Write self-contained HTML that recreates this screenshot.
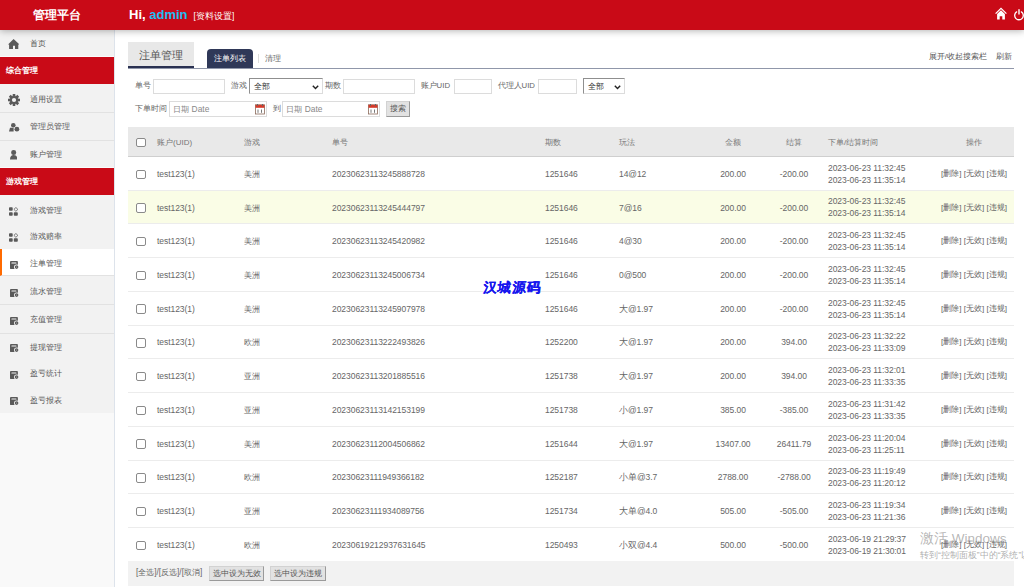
<!DOCTYPE html>
<html><head><meta charset="utf-8">
<style>
*{box-sizing:border-box;margin:0;padding:0}
html,body{width:1024px;height:587px;overflow:hidden;background:#fff;font-family:"Liberation Sans",sans-serif;color:#666;position:relative}
#hdr{position:absolute;left:0;top:0;width:1024px;height:29.9px;background:#c90a17;z-index:5;box-shadow:0 1px 7px rgba(0,0,0,.3)}
#logo{position:absolute;left:0;top:0;width:114px;height:29px;line-height:30px;text-align:center;color:#fff;font-size:12px;font-weight:bold}
#hi{position:absolute;left:129px;top:0;height:29px;line-height:30px;color:#fff;font-size:13px;font-weight:bold;white-space:nowrap}
#hi b{color:#1fbdf3}
#hi span{font-size:8.5px;font-weight:normal;margin-left:6px}
#side{position:absolute;left:0;top:29px;width:115px;height:558px;background:#f9f9f9;border-right:1px solid #dde3eb}
.mi{position:absolute;left:0;width:114px;background:#f2f2f2;font-size:8px;padding-left:29.5px;color:#555;white-space:nowrap}
.mi.act{background:#fff;border-left:2.5px solid #ff6a00;padding-left:27.5px}
.mh{position:absolute;left:0;width:114px;box-shadow:0 -1px 0 #fbfbfb;background:#c90a17;color:#fff;font-weight:bold;font-size:8px;padding-left:6px}
.ic{position:absolute}
#tabbox{position:absolute;left:128px;top:41.5px;width:66px;height:26.5px;background:#e8e8e8;border-bottom:2px solid #2a3152;color:#555;font-size:10.5px;text-align:center;line-height:26px}
#tline{position:absolute;left:128px;top:67.5px;width:886px;height:1px;background:#9097aa}
#pill{position:absolute;left:207px;top:49.3px;width:45.5px;height:19px;background:#2f3858;border-radius:4px 4px 0 0;color:#fff;font-size:8px;text-align:center;line-height:20px}
#sep{position:absolute;left:258px;top:54px;width:1px;height:9px;background:#ddd}
#clr{position:absolute;left:265px;top:53px;font-size:8px;color:#666;line-height:12px}
.tools{position:absolute;top:51px;font-size:8px;color:#555;line-height:11px;white-space:nowrap}
.lb{position:absolute;font-size:7.8px;color:#666;line-height:10px;white-space:nowrap}
.inp{position:absolute;height:15.5px;border:1px solid #dcdcdc;background:#fff}
.sel{position:absolute;height:16px;border:1px solid #8f8f8f;border-right-color:#dcdcdc;border-bottom-color:#dcdcdc;background:#fff;font-size:8.2px;color:#333;line-height:16.5px;padding-left:4px}
.sel svg{position:absolute;right:3px;top:5.5px}
.dt{position:absolute;height:15.5px;border:1px solid #dcdcdc;background:#fff;font-size:8.4px;color:#888;line-height:15.5px;padding-left:3.3px}
.cal{position:absolute;right:1.2px;top:2px}
.btn{position:absolute;border:1px solid;border-color:#d2d2d2 #9a9a9a #9a9a9a #d2d2d2;background:#e2e2e2;font-size:8px;color:#555;text-align:center}
#tbl{position:absolute;left:128px;top:0;width:886px}
.th{position:absolute;left:128px;width:886px;background:#e9e9e9;border-bottom:1px solid #cfcfcf}
.tr{position:absolute;left:128px;width:886px;background:#fff;border-bottom:1px solid #ececec}
.tr.hl{background:#fafde6}
.th span,.tr span{position:absolute;font-size:8.3px;color:#666;white-space:nowrap}
.th span{font-size:8px;color:#777}
.tr span.n{font-size:8.5px;letter-spacing:-0.05px}
span.c{width:80px;text-align:center}
.tr span.tm{line-height:12px}
.tr span.op{width:80px;font-size:8.1px}
.cb{position:absolute;width:9.5px;height:9.5px;border:1px solid #8a8a8a;border-radius:2px;background:#fff}
#foot{position:absolute;left:128px;top:560.6px;width:886px;height:25.2px;background:#f2f2f2}
#foot .t{position:absolute;left:8px;top:7.5px;font-size:8.2px;color:#666;line-height:10px;white-space:nowrap}
#wm1{position:absolute;left:920px;top:530.5px;font-size:13.5px;color:rgba(120,120,120,.55);white-space:nowrap;line-height:16px}
#wm2{position:absolute;left:920px;top:550px;font-size:8.5px;color:rgba(120,120,120,.6);white-space:nowrap;line-height:11px}
#brand{position:absolute;left:483px;top:280px;font-size:13.5px;font-weight:bold;color:#1616ee;letter-spacing:0.6px;white-space:nowrap;line-height:16px;transform:skewX(-6deg);text-shadow:0.25px 0 0 #1616ee}
</style></head><body>
<div id="hdr">
  <div id="logo">管理平台</div>
  <div id="hi">Hi, <b>admin</b><span>[资料设置]</span></div>
  <svg style="position:absolute;left:995px;top:7.2px" width="12" height="13" viewBox="0 0 12 13"><path d="M0.6 6.6L6 1.3 11.4 6.6" fill="none" stroke="#fff" stroke-width="1.3"/><path d="M2.1 6.9L6 3.2 9.9 6.9V12.4H7.3V9.2H4.7V12.4H2.1Z" fill="#fff"/></svg>
  <svg style="position:absolute;left:1013.3px;top:8.6px" width="12" height="12" viewBox="0 0 12 12"><path d="M3.6 2.9A4.3 4.3 0 1 0 8.4 2.9" fill="none" stroke="#fff" stroke-width="1.3" stroke-linecap="round"/><path d="M6 0.7V5" stroke="#fff" stroke-width="1.4" stroke-linecap="round"/></svg>
</div>
<div id="side"></div><div style="position:absolute;left:0;top:29px;width:114px;height:383.8px;background:#f2f2f2"></div>
<div class="mi" style="top:29.00px;height:27.8px;line-height:29.30px">首页</div><div class="mh" style="top:56.80px;height:27.2px;line-height:28.70px">综合管理</div><div class="mi" style="top:84.00px;height:28.7px;line-height:31.80px;border-bottom:1px solid #e2e2e2">通用设置</div><div class="mi" style="top:112.70px;height:28.2px;line-height:28.10px;border-bottom:1px solid #e2e2e2">管理员管理</div><div class="mi" style="top:140.90px;height:27.1px;line-height:28.60px">账户管理</div><div class="mh" style="top:168.00px;height:26.9px;line-height:28.40px">游戏管理</div><div class="mi" style="top:194.90px;height:27.1px;line-height:31.20px">游戏管理</div><div class="mi" style="top:222.00px;height:27.1px;line-height:29.40px">游戏赔率</div><div class="mi act" style="top:249.10px;height:27.4px;line-height:30.50px;border-bottom:1px solid #e2e2e2">注单管理</div><div class="mi" style="top:276.50px;height:28.6px;line-height:30.10px;border-bottom:1px solid #e2e2e2">流水管理</div><div class="mi" style="top:305.10px;height:28.7px;line-height:30.20px;border-bottom:1px solid #e2e2e2">充值管理</div><div class="mi" style="top:333.80px;height:26.4px;line-height:27.90px">提现管理</div><div class="mi" style="top:360.20px;height:26.3px;line-height:27.80px">盈亏统计</div><div class="mi" style="top:386.50px;height:26.6px;line-height:27.50px">盈亏报表</div><svg class="ic" style="left:8.1px;top:39.2px" width="11.4" height="10.3" viewBox="0 0 11.4 10.3"><path d="M5.6 0L0 5.4H1.1V10.2H5V6.7H7V10.2H10.3V5.4H11.3Z" fill="#5a5a5a"/></svg><svg class="ic" style="left:8px;top:93.75px" width="12" height="12" viewBox="-6 -6 12 12"><path d="M-1.25 -6H1.25L1.5 -3.2H-1.5Z" transform="rotate(0)" fill="#5a5a5a"/><path d="M-1.25 -6H1.25L1.5 -3.2H-1.5Z" transform="rotate(45)" fill="#5a5a5a"/><path d="M-1.25 -6H1.25L1.5 -3.2H-1.5Z" transform="rotate(90)" fill="#5a5a5a"/><path d="M-1.25 -6H1.25L1.5 -3.2H-1.5Z" transform="rotate(135)" fill="#5a5a5a"/><path d="M-1.25 -6H1.25L1.5 -3.2H-1.5Z" transform="rotate(180)" fill="#5a5a5a"/><path d="M-1.25 -6H1.25L1.5 -3.2H-1.5Z" transform="rotate(225)" fill="#5a5a5a"/><path d="M-1.25 -6H1.25L1.5 -3.2H-1.5Z" transform="rotate(270)" fill="#5a5a5a"/><path d="M-1.25 -6H1.25L1.5 -3.2H-1.5Z" transform="rotate(315)" fill="#5a5a5a"/><circle r="4.1" fill="#5a5a5a"/><circle r="2.1" fill="#f2f2f2"/></svg><svg class="ic" style="left:8.6px;top:123px" width="11" height="10" viewBox="0 0 11 10"><circle cx="4.3" cy="2.3" r="2.3" fill="#5a5a5a"/><path d="M1 4.8H4.6V8.5H0Z" fill="#5a5a5a"/><circle cx="7.9" cy="6.2" r="2.4" fill="#5a5a5a"/></svg><svg class="ic" style="left:9.9px;top:150.1px" width="7.4" height="9.8" viewBox="0 0 7.4 9.8"><circle cx="3.7" cy="2.6" r="2.5" fill="#5a5a5a"/><path d="M0 9.6C0 6.6 1.2 5 3.7 5S7.4 6.6 7.4 9.6Z" fill="#5a5a5a"/></svg><svg class="ic" style="left:9.3px;top:206.5px" width="9.6" height="9" viewBox="0 0 9.6 9"><rect x="0" y="0.2" width="3.7" height="3.5" rx="0.8" fill="#5a5a5a"/><rect x="0" y="5.2" width="3.7" height="3.5" rx="0.8" fill="#5a5a5a"/><rect x="4.8" y="5.2" width="4" height="3.5" rx="0.8" fill="#5a5a5a"/><path d="M6.9 0.5L8.9 2.4 6.9 4.3 4.9 2.4Z" fill="none" stroke="#5a5a5a" stroke-width="0.8"/></svg><svg class="ic" style="left:9.3px;top:233px" width="9.6" height="9" viewBox="0 0 9.6 9"><rect x="0" y="0.2" width="3.7" height="3.5" rx="0.8" fill="#5a5a5a"/><rect x="0" y="5.2" width="3.7" height="3.5" rx="0.8" fill="#5a5a5a"/><rect x="4.8" y="5.2" width="4" height="3.5" rx="0.8" fill="#5a5a5a"/><path d="M6.9 0.5L8.9 2.4 6.9 4.3 4.9 2.4Z" fill="none" stroke="#5a5a5a" stroke-width="0.8"/></svg><svg class="ic" style="left:9.9px;top:260.6px" width="9" height="8.2" viewBox="0 0 9 8.2"><rect x="0" y="0" width="7.9" height="8" rx="0.5" fill="#5a5a5a"/><rect x="1.4" y="1.5" width="5.1" height="1.1" rx="0.5" fill="#fff"/><circle cx="6.6" cy="6.1" r="2.6" fill="#fff"/><circle cx="6.6" cy="6.1" r="1.8" fill="#5a5a5a"/><circle cx="6.6" cy="6.1" r="0.6" fill="#aaa"/></svg><svg class="ic" style="left:9.9px;top:288.5px" width="9" height="8.2" viewBox="0 0 9 8.2"><rect x="0" y="0" width="7.9" height="8" rx="0.5" fill="#5a5a5a"/><rect x="1.4" y="1.5" width="5.1" height="1.1" rx="0.5" fill="#f2f2f2"/><circle cx="6.6" cy="6.1" r="2.6" fill="#f2f2f2"/><circle cx="6.6" cy="6.1" r="1.8" fill="#5a5a5a"/><circle cx="6.6" cy="6.1" r="0.6" fill="#aaa"/></svg><svg class="ic" style="left:9.9px;top:316.9px" width="9" height="8.2" viewBox="0 0 9 8.2"><rect x="0" y="0" width="7.9" height="8" rx="0.5" fill="#5a5a5a"/><rect x="1.4" y="1.5" width="5.1" height="1.1" rx="0.5" fill="#f2f2f2"/><circle cx="6.6" cy="6.1" r="2.6" fill="#f2f2f2"/><circle cx="6.6" cy="6.1" r="1.8" fill="#5a5a5a"/><circle cx="6.6" cy="6.1" r="0.6" fill="#aaa"/></svg><svg class="ic" style="left:9.9px;top:344.20000000000005px" width="9" height="8.2" viewBox="0 0 9 8.2"><rect x="0" y="0" width="7.9" height="8" rx="0.5" fill="#5a5a5a"/><rect x="1.4" y="1.5" width="5.1" height="1.1" rx="0.5" fill="#f2f2f2"/><circle cx="6.6" cy="6.1" r="2.6" fill="#f2f2f2"/><circle cx="6.6" cy="6.1" r="1.8" fill="#5a5a5a"/><circle cx="6.6" cy="6.1" r="0.6" fill="#aaa"/></svg><svg class="ic" style="left:9.9px;top:370.80000000000007px" width="9" height="8.2" viewBox="0 0 9 8.2"><rect x="0" y="0" width="7.9" height="8" rx="0.5" fill="#5a5a5a"/><rect x="1.4" y="1.5" width="5.1" height="1.1" rx="0.5" fill="#f2f2f2"/><circle cx="6.6" cy="6.1" r="2.6" fill="#f2f2f2"/><circle cx="6.6" cy="6.1" r="1.8" fill="#5a5a5a"/><circle cx="6.6" cy="6.1" r="0.6" fill="#aaa"/></svg><svg class="ic" style="left:9.9px;top:397.1px" width="9" height="8.2" viewBox="0 0 9 8.2"><rect x="0" y="0" width="7.9" height="8" rx="0.5" fill="#5a5a5a"/><rect x="1.4" y="1.5" width="5.1" height="1.1" rx="0.5" fill="#f2f2f2"/><circle cx="6.6" cy="6.1" r="2.6" fill="#f2f2f2"/><circle cx="6.6" cy="6.1" r="1.8" fill="#5a5a5a"/><circle cx="6.6" cy="6.1" r="0.6" fill="#aaa"/></svg>
<div id="tabbox">注单管理</div>
<div id="tline"></div>
<div id="pill">注单列表</div>
<div id="sep"></div>
<div id="clr">清理</div>
<div class="tools" style="left:928.7px">展开/收起搜索栏</div><div class="tools" style="left:995.5px">刷新</div>

<div class="lb" style="left:135px;top:81px">单号</div>
<div class="inp" style="left:153px;top:78.8px;width:72px"></div>
<div class="lb" style="left:230.5px;top:81px">游戏</div>
<div class="sel" style="left:249px;top:78.2px;width:73.5px">全部<svg width="7" height="5" viewBox="0 0 7 5"><path d="M0.8 0.8L3.5 3.6 6.2 0.8" fill="none" stroke="#222" stroke-width="1.4"/></svg></div>
<div class="lb" style="left:325.3px;top:81px">期数</div>
<div class="inp" style="left:343.4px;top:78.8px;width:71.3px"></div>
<div class="lb" style="left:420.6px;top:81px">账户UID</div>
<div class="inp" style="left:453.8px;top:78.8px;width:38.4px"></div>
<div class="lb" style="left:497.5px;top:81px">代理人UID</div>
<div class="inp" style="left:538px;top:78.8px;width:38.6px"></div>
<div class="sel" style="left:583px;top:78.2px;width:41.7px">全部<svg width="7" height="5" viewBox="0 0 7 5"><path d="M0.8 0.8L3.5 3.6 6.2 0.8" fill="none" stroke="#222" stroke-width="1.4"/></svg></div>

<div class="lb" style="left:135px;top:103.5px">下单时间</div>
<div class="dt" style="left:169px;top:101.3px;width:97.8px">日期 Date<svg class="cal" width="10" height="10.5" viewBox="0 0 10 10.5"><rect x="0.5" y="0.8" width="9" height="9.2" fill="#fff" stroke="#8a6a5a" stroke-width="0.8"/><rect x="0.5" y="0.8" width="9" height="3" fill="#d43a2a"/><rect x="2" y="0" width="1" height="2" fill="#666"/><rect x="7" y="0" width="1" height="2" fill="#666"/><path d="M3 5.5V8.8M6.5 5.5V8.8" stroke="#555" stroke-width="0.8"/></svg></div>
<div class="lb" style="left:272.6px;top:103.5px">到</div>
<div class="dt" style="left:282.2px;top:101.3px;width:97.5px">日期 Date<svg class="cal" width="10" height="10.5" viewBox="0 0 10 10.5"><rect x="0.5" y="0.8" width="9" height="9.2" fill="#fff" stroke="#8a6a5a" stroke-width="0.8"/><rect x="0.5" y="0.8" width="9" height="3" fill="#d43a2a"/><rect x="2" y="0" width="1" height="2" fill="#666"/><rect x="7" y="0" width="1" height="2" fill="#666"/><path d="M3 5.5V8.8M6.5 5.5V8.8" stroke="#555" stroke-width="0.8"/></svg></div>
<div class="btn" style="left:385.6px;top:100.8px;width:24.5px;height:16px;line-height:14px">搜索</div>

<div class="th" style="top:127px;height:30px"><i class="cb" style="left:8px;top:10.5px"></i><span style="left:29px;top:0.8px;line-height:30px">账户(UID)</span><span style="left:116px;top:0.8px;line-height:30px">游戏</span><span style="left:204px;top:0.8px;line-height:30px">单号</span><span style="left:417px;top:0.8px;line-height:30px">期数</span><span style="left:491px;top:0.8px;line-height:30px">玩法</span><span class="c" style="left:565px;top:0.8px;line-height:30px">金额</span><span class="c" style="left:626px;top:0.8px;line-height:30px">结算</span><span style="left:700px;top:0.8px;line-height:30px">下单/结算时间</span><span class="c" style="left:806px;top:0.8px;line-height:30px">操作</span></div><div class="tr" style="top:157.00px;height:33.74px"><i class="cb" style="left:8px;top:12.5px"></i><span class="n" style="left:29px;top:0.8px;line-height:32.74px">test123(1)</span><span style="left:116px;top:0.8px;line-height:32.74px">美洲</span><span class="n" style="left:204px;top:0.8px;line-height:32.74px">20230623113245888728</span><span class="n" style="left:417px;top:0.8px;line-height:32.74px">1251646</span><span class="n" style="left:491px;top:0.8px;line-height:32.74px">14@12</span><span class="c n" style="left:565px;top:0.8px;line-height:32.74px">200.00</span><span class="c n" style="left:626px;top:0.8px;line-height:32.74px">-200.00</span><span class="n tm" style="left:700px;top:4.7px">2023-06-23 11:32:45<br>2023-06-23 11:35:14</span><span class="c op" style="left:806px;top:0.8px;line-height:32.74px">[删除] [无效] [违规]</span></div><div class="tr hl" style="top:190.74px;height:33.74px"><i class="cb" style="left:8px;top:12.5px"></i><span class="n" style="left:29px;top:0.8px;line-height:32.74px">test123(1)</span><span style="left:116px;top:0.8px;line-height:32.74px">美洲</span><span class="n" style="left:204px;top:0.8px;line-height:32.74px">20230623113245444797</span><span class="n" style="left:417px;top:0.8px;line-height:32.74px">1251646</span><span class="n" style="left:491px;top:0.8px;line-height:32.74px">7@16</span><span class="c n" style="left:565px;top:0.8px;line-height:32.74px">200.00</span><span class="c n" style="left:626px;top:0.8px;line-height:32.74px">-200.00</span><span class="n tm" style="left:700px;top:4.7px">2023-06-23 11:32:45<br>2023-06-23 11:35:14</span><span class="c op" style="left:806px;top:0.8px;line-height:32.74px">[删除] [无效] [违规]</span></div><div class="tr" style="top:224.48px;height:33.74px"><i class="cb" style="left:8px;top:12.5px"></i><span class="n" style="left:29px;top:0.8px;line-height:32.74px">test123(1)</span><span style="left:116px;top:0.8px;line-height:32.74px">美洲</span><span class="n" style="left:204px;top:0.8px;line-height:32.74px">20230623113245420982</span><span class="n" style="left:417px;top:0.8px;line-height:32.74px">1251646</span><span class="n" style="left:491px;top:0.8px;line-height:32.74px">4@30</span><span class="c n" style="left:565px;top:0.8px;line-height:32.74px">200.00</span><span class="c n" style="left:626px;top:0.8px;line-height:32.74px">-200.00</span><span class="n tm" style="left:700px;top:4.7px">2023-06-23 11:32:45<br>2023-06-23 11:35:14</span><span class="c op" style="left:806px;top:0.8px;line-height:32.74px">[删除] [无效] [违规]</span></div><div class="tr" style="top:258.22px;height:33.74px"><i class="cb" style="left:8px;top:12.5px"></i><span class="n" style="left:29px;top:0.8px;line-height:32.74px">test123(1)</span><span style="left:116px;top:0.8px;line-height:32.74px">美洲</span><span class="n" style="left:204px;top:0.8px;line-height:32.74px">20230623113245006734</span><span class="n" style="left:417px;top:0.8px;line-height:32.74px">1251646</span><span class="n" style="left:491px;top:0.8px;line-height:32.74px">0@500</span><span class="c n" style="left:565px;top:0.8px;line-height:32.74px">200.00</span><span class="c n" style="left:626px;top:0.8px;line-height:32.74px">-200.00</span><span class="n tm" style="left:700px;top:4.7px">2023-06-23 11:32:45<br>2023-06-23 11:35:14</span><span class="c op" style="left:806px;top:0.8px;line-height:32.74px">[删除] [无效] [违规]</span></div><div class="tr" style="top:291.96px;height:33.74px"><i class="cb" style="left:8px;top:12.5px"></i><span class="n" style="left:29px;top:0.8px;line-height:32.74px">test123(1)</span><span style="left:116px;top:0.8px;line-height:32.74px">美洲</span><span class="n" style="left:204px;top:0.8px;line-height:32.74px">20230623113245907978</span><span class="n" style="left:417px;top:0.8px;line-height:32.74px">1251646</span><span class="n" style="left:491px;top:0.8px;line-height:32.74px">大@1.97</span><span class="c n" style="left:565px;top:0.8px;line-height:32.74px">200.00</span><span class="c n" style="left:626px;top:0.8px;line-height:32.74px">-200.00</span><span class="n tm" style="left:700px;top:4.7px">2023-06-23 11:32:45<br>2023-06-23 11:35:14</span><span class="c op" style="left:806px;top:0.8px;line-height:32.74px">[删除] [无效] [违规]</span></div><div class="tr" style="top:325.70px;height:33.74px"><i class="cb" style="left:8px;top:12.5px"></i><span class="n" style="left:29px;top:0.8px;line-height:32.74px">test123(1)</span><span style="left:116px;top:0.8px;line-height:32.74px">欧洲</span><span class="n" style="left:204px;top:0.8px;line-height:32.74px">20230623113222493826</span><span class="n" style="left:417px;top:0.8px;line-height:32.74px">1252200</span><span class="n" style="left:491px;top:0.8px;line-height:32.74px">大@1.97</span><span class="c n" style="left:565px;top:0.8px;line-height:32.74px">200.00</span><span class="c n" style="left:626px;top:0.8px;line-height:32.74px">394.00</span><span class="n tm" style="left:700px;top:4.7px">2023-06-23 11:32:22<br>2023-06-23 11:33:09</span><span class="c op" style="left:806px;top:0.8px;line-height:32.74px">[删除] [无效] [违规]</span></div><div class="tr" style="top:359.44px;height:33.74px"><i class="cb" style="left:8px;top:12.5px"></i><span class="n" style="left:29px;top:0.8px;line-height:32.74px">test123(1)</span><span style="left:116px;top:0.8px;line-height:32.74px">亚洲</span><span class="n" style="left:204px;top:0.8px;line-height:32.74px">20230623113201885516</span><span class="n" style="left:417px;top:0.8px;line-height:32.74px">1251738</span><span class="n" style="left:491px;top:0.8px;line-height:32.74px">大@1.97</span><span class="c n" style="left:565px;top:0.8px;line-height:32.74px">200.00</span><span class="c n" style="left:626px;top:0.8px;line-height:32.74px">394.00</span><span class="n tm" style="left:700px;top:4.7px">2023-06-23 11:32:01<br>2023-06-23 11:33:35</span><span class="c op" style="left:806px;top:0.8px;line-height:32.74px">[删除] [无效] [违规]</span></div><div class="tr" style="top:393.18px;height:33.74px"><i class="cb" style="left:8px;top:12.5px"></i><span class="n" style="left:29px;top:0.8px;line-height:32.74px">test123(1)</span><span style="left:116px;top:0.8px;line-height:32.74px">亚洲</span><span class="n" style="left:204px;top:0.8px;line-height:32.74px">20230623113142153199</span><span class="n" style="left:417px;top:0.8px;line-height:32.74px">1251738</span><span class="n" style="left:491px;top:0.8px;line-height:32.74px">小@1.97</span><span class="c n" style="left:565px;top:0.8px;line-height:32.74px">385.00</span><span class="c n" style="left:626px;top:0.8px;line-height:32.74px">-385.00</span><span class="n tm" style="left:700px;top:4.7px">2023-06-23 11:31:42<br>2023-06-23 11:33:35</span><span class="c op" style="left:806px;top:0.8px;line-height:32.74px">[删除] [无效] [违规]</span></div><div class="tr" style="top:426.92px;height:33.74px"><i class="cb" style="left:8px;top:12.5px"></i><span class="n" style="left:29px;top:0.8px;line-height:32.74px">test123(1)</span><span style="left:116px;top:0.8px;line-height:32.74px">美洲</span><span class="n" style="left:204px;top:0.8px;line-height:32.74px">20230623112004506862</span><span class="n" style="left:417px;top:0.8px;line-height:32.74px">1251644</span><span class="n" style="left:491px;top:0.8px;line-height:32.74px">大@1.97</span><span class="c n" style="left:565px;top:0.8px;line-height:32.74px">13407.00</span><span class="c n" style="left:626px;top:0.8px;line-height:32.74px">26411.79</span><span class="n tm" style="left:700px;top:4.7px">2023-06-23 11:20:04<br>2023-06-23 11:25:11</span><span class="c op" style="left:806px;top:0.8px;line-height:32.74px">[删除] [无效] [违规]</span></div><div class="tr" style="top:460.66px;height:33.74px"><i class="cb" style="left:8px;top:12.5px"></i><span class="n" style="left:29px;top:0.8px;line-height:32.74px">test123(1)</span><span style="left:116px;top:0.8px;line-height:32.74px">欧洲</span><span class="n" style="left:204px;top:0.8px;line-height:32.74px">20230623111949366182</span><span class="n" style="left:417px;top:0.8px;line-height:32.74px">1252187</span><span class="n" style="left:491px;top:0.8px;line-height:32.74px">小单@3.7</span><span class="c n" style="left:565px;top:0.8px;line-height:32.74px">2788.00</span><span class="c n" style="left:626px;top:0.8px;line-height:32.74px">-2788.00</span><span class="n tm" style="left:700px;top:4.7px">2023-06-23 11:19:49<br>2023-06-23 11:20:12</span><span class="c op" style="left:806px;top:0.8px;line-height:32.74px">[删除] [无效] [违规]</span></div><div class="tr" style="top:494.40px;height:33.74px"><i class="cb" style="left:8px;top:12.5px"></i><span class="n" style="left:29px;top:0.8px;line-height:32.74px">test123(1)</span><span style="left:116px;top:0.8px;line-height:32.74px">亚洲</span><span class="n" style="left:204px;top:0.8px;line-height:32.74px">20230623111934089756</span><span class="n" style="left:417px;top:0.8px;line-height:32.74px">1251734</span><span class="n" style="left:491px;top:0.8px;line-height:32.74px">大单@4.0</span><span class="c n" style="left:565px;top:0.8px;line-height:32.74px">505.00</span><span class="c n" style="left:626px;top:0.8px;line-height:32.74px">-505.00</span><span class="n tm" style="left:700px;top:4.7px">2023-06-23 11:19:34<br>2023-06-23 11:21:36</span><span class="c op" style="left:806px;top:0.8px;line-height:32.74px">[删除] [无效] [违规]</span></div><div class="tr" style="top:528.14px;height:33.74px"><i class="cb" style="left:8px;top:12.5px"></i><span class="n" style="left:29px;top:0.8px;line-height:32.74px">test123(1)</span><span style="left:116px;top:0.8px;line-height:32.74px">欧洲</span><span class="n" style="left:204px;top:0.8px;line-height:32.74px">20230619212937631645</span><span class="n" style="left:417px;top:0.8px;line-height:32.74px">1250493</span><span class="n" style="left:491px;top:0.8px;line-height:32.74px">小双@4.4</span><span class="c n" style="left:565px;top:0.8px;line-height:32.74px">500.00</span><span class="c n" style="left:626px;top:0.8px;line-height:32.74px">-500.00</span><span class="n tm" style="left:700px;top:4.7px">2023-06-19 21:29:37<br>2023-06-19 21:30:01</span><span class="c op" style="left:806px;top:0.8px;line-height:32.74px">[删除] [无效] [违规]</span></div>
<div id="foot"><span class="t">[全选]/[反选]/[取消]</span>
<div class="btn" style="left:80.7px;top:5px;width:55.7px;height:15.7px;line-height:14px">选中设为无效</div>
<div class="btn" style="left:142px;top:5px;width:56px;height:15.7px;line-height:14px">选中设为违规</div>
</div>
<div id="brand">汉城源码</div>
<div id="wm1">激活 Windows</div>
<div id="wm2">转到“控制面板”中的“系统”以激活 Windows。</div>
</body></html>
